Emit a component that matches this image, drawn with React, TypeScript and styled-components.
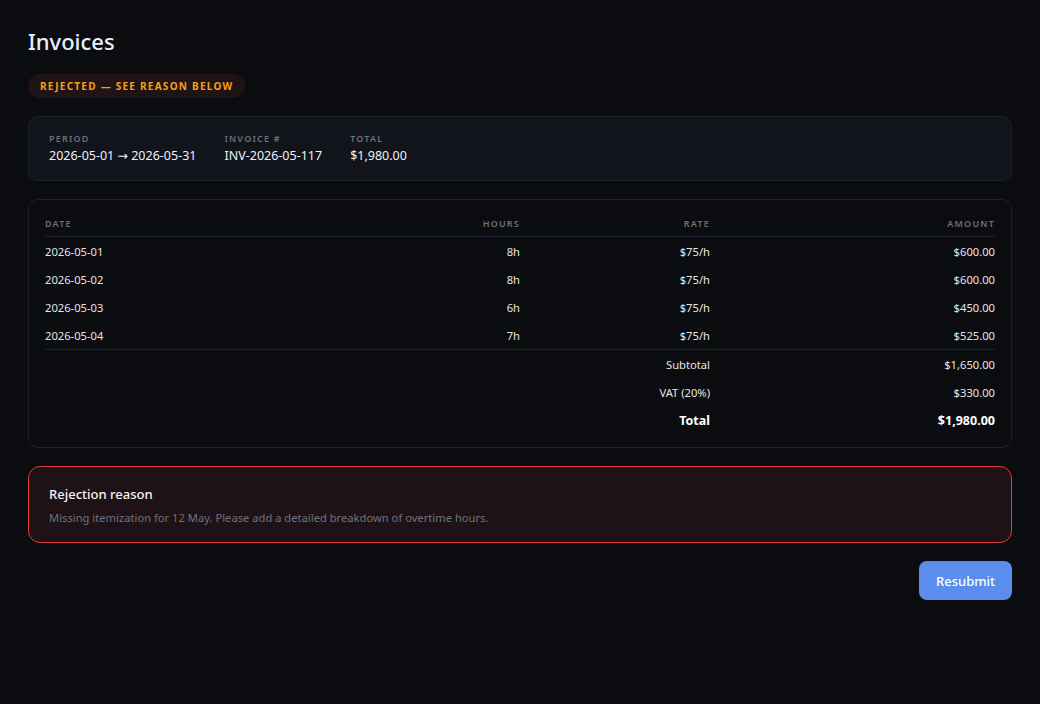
import styled, { createGlobalStyle } from "styled-components";

const GlobalStyle = createGlobalStyle`
  html, body {
    margin: 0;
    background: #0b0c10;
  }
  body {
    font-family: "Noto Sans", "DejaVu Sans", sans-serif;
    color: #e5e7eb;
  }
`;

const Page = styled.main`
  padding: 26px 28px 40px;
  display: flex;
  flex-direction: column;
`;

const Title = styled.h1`
  margin: 0;
  font-size: 22px;
  font-weight: 500;
  color: #e6f0fb;
  line-height: 30px;
  padding-bottom: 2px;
`;

const Badge = styled.span`
  align-self: flex-start;
  margin-top: 16px;
  height: 24px;
  padding: 0 12px;
  display: inline-flex;
  align-items: center;
  border-radius: 12px;
  background: #1f1315;
  color: #f5a016;
  font-size: 10px;
  font-weight: 700;
  letter-spacing: 1.25px;
  text-transform: uppercase;
`;

const Card = styled.section<{ $raised?: boolean }>`
  margin-top: 18px;
  border: 1px solid #1c212b;
  border-radius: 10px;
  background: ${(p) => (p.$raised ? "#11141b" : "#0b0c10")};
`;

const Meta = styled.div`
  display: flex;
  gap: 28px;
  padding: 16px 20px 15px;
`;

const Field = styled.div`
  display: flex;
  flex-direction: column;
  gap: 2px;
`;

const Label = styled.span`
  font-size: 9px;
  font-weight: 600;
  letter-spacing: 1.2px;
  color: #6b7280;
  text-transform: uppercase;
  line-height: 12px;
`;

const Value = styled.span`
  font-size: 12.5px;
  color: #eef1f5;
  line-height: 18px;
`;

const Table = styled.div`
  padding: 18px 16px 13px;
  display: grid;
  grid-template-columns: 40% 10% 20% 30%;
`;

const Cell = styled.div<{ $right?: boolean; $bold?: boolean }>`
  height: 28px;
  display: flex;
  align-items: center;
  justify-content: ${(p) => (p.$right ? "flex-end" : "flex-start")};
  font-size: ${(p) => (p.$bold ? "12.5px" : "11.2px")};
  font-weight: ${(p) => (p.$bold ? 700 : 400)};
  color: ${(p) => (p.$bold ? "#ffffff" : "#e8e6e3")};
`;

const Head = styled(Cell)`
  height: 18px;
  border-bottom: 1px solid #1c2330;
  font-size: 9px;
  font-weight: 600;
  letter-spacing: 1.2px;
  color: #6b7280;
  text-transform: uppercase;
  align-items: flex-start;
  line-height: 12px;
`;

const Divider = styled.div`
  grid-column: 1 / -1;
  border-top: 1px solid #1c2330;
`;

const Notice = styled.section`
  margin-top: 18px;
  border: 1px solid #e0393e;
  border-radius: 12px;
  background: #1f1216;
  padding: 17px 20px 15px;
  display: flex;
  flex-direction: column;
  gap: 5px;
`;

const NoticeTitle = styled.h2`
  margin: 0;
  font-size: 13px;
  font-weight: 500;
  color: #f3f4f6;
  line-height: 20px;
`;

const NoticeText = styled.p`
  margin: 0;
  font-size: 11.2px;
  color: #6b7280;
  line-height: 18px;
`;

const Actions = styled.div`
  margin-top: 18px;
  display: flex;
  justify-content: flex-end;
`;

const Button = styled.button`
  height: 39px;
  padding: 0 17px;
  border: none;
  border-radius: 8px;
  background: #5b8def;
  color: #ffffff;
  font-family: inherit;
  font-size: 13px;
  font-weight: 500;
  cursor: pointer;
`;

const rows = [
  { date: "2026-05-01", hours: "8h", rate: "$75/h", amount: "$600.00" },
  { date: "2026-05-02", hours: "8h", rate: "$75/h", amount: "$600.00" },
  { date: "2026-05-03", hours: "6h", rate: "$75/h", amount: "$450.00" },
  { date: "2026-05-04", hours: "7h", rate: "$75/h", amount: "$525.00" },
];

const totals = [
  { label: "Subtotal", value: "$1,650.00" },
  { label: "VAT (20%)", value: "$330.00" },
  { label: "Total", value: "$1,980.00", bold: true },
];

export default function App() {
  return (
    <>
      <GlobalStyle />
      <Page>
        <Title>Invoices</Title>
        <Badge>Rejected — see reason below</Badge>

        <Card $raised>
          <Meta>
            <Field>
              <Label>Period</Label>
              <Value>2026-05-01 → 2026-05-31</Value>
            </Field>
            <Field>
              <Label>Invoice #</Label>
              <Value>INV-2026-05-117</Value>
            </Field>
            <Field>
              <Label>Total</Label>
              <Value>$1,980.00</Value>
            </Field>
          </Meta>
        </Card>

        <Card>
          <Table>
            <Head>Date</Head>
            <Head $right>Hours</Head>
            <Head $right>Rate</Head>
            <Head $right>Amount</Head>
            {rows.map((r) => (
              <>
                <Cell key={r.date}>{r.date}</Cell>
                <Cell $right>{r.hours}</Cell>
                <Cell $right>{r.rate}</Cell>
                <Cell $right>{r.amount}</Cell>
              </>
            ))}
            <Divider />
            {totals.map((t) => (
              <>
                <Cell />
                <Cell />
                <Cell $right $bold={t.bold}>
                  {t.label}
                </Cell>
                <Cell $right $bold={t.bold}>
                  {t.value}
                </Cell>
              </>
            ))}
          </Table>
        </Card>

        <Notice>
          <NoticeTitle>Rejection reason</NoticeTitle>
          <NoticeText>
            Missing itemization for 12 May. Please add a detailed breakdown of
            overtime hours.
          </NoticeText>
        </Notice>

        <Actions>
          <Button>Resubmit</Button>
        </Actions>
      </Page>
    </>
  );
}
